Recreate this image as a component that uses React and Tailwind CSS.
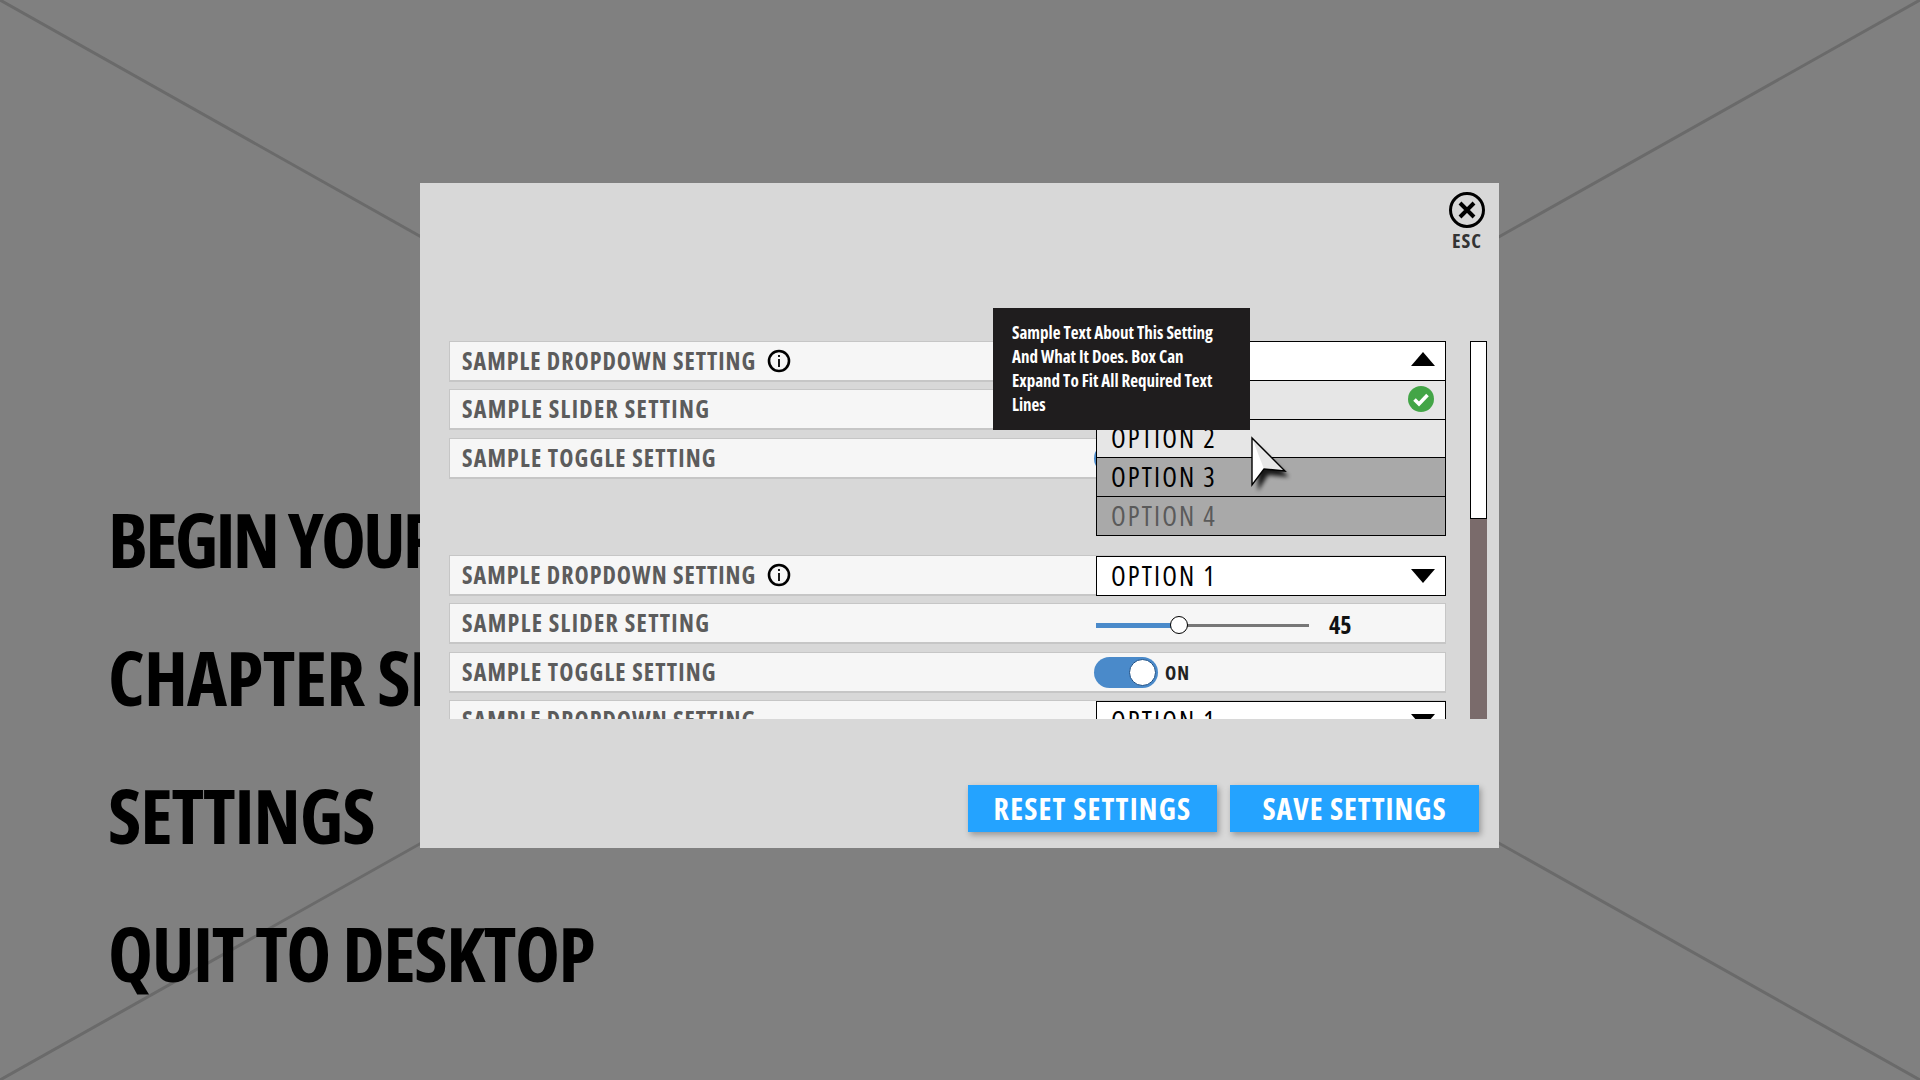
import React from "react";

const Info = () => (
  <svg width="24" height="24" viewBox="0 0 24 24" className="ml-[11px] shrink-0">
    <circle cx="12" cy="12" r="10" fill="none" stroke="#000" strokeWidth="2.6" />
    <rect x="11.1" y="10" width="1.8" height="8" fill="#000" />
    <rect x="11.1" y="6" width="1.8" height="2" fill="#000" />
  </svg>
);

const Caret = ({ up }) => (
  <svg width="24" height="14" viewBox="0 0 24 14" className={up ? "shrink-0 -mt-[5px]" : "shrink-0"}>
    <polygon points={up ? "0,14 24,14 12,0" : "0,0 24,0 12,14"} fill="#000" />
  </svg>
);

const Row = ({ label, info, track, children }) => (
  <div className="flex h-[41px] items-center bg-[#f6f6f6] border border-[#c6c6c6] border-b-2">
    <div className={"flex w-[646px] shrink-0 items-center pl-3 text-[24px] font-bold text-[#5c5c5c] whitespace-nowrap " + track}>
      {label}
      {info && <Info />}
    </div>
    <div className="relative h-full w-[349px] shrink-0">{children}</div>
  </div>
);

const Select = () => (
  <div className="flex h-[40px] w-[350px] items-center justify-between bg-white border border-black pl-[14px] pr-[10px]">
    <span className="text-[27px] tracking-[2.1px] text-black">OPTION 1</span>
    <Caret />
  </div>
);

const OpenSelect = () => (
  <div className="absolute -top-px left-0 z-10 flex w-[350px] flex-col border border-black">
    <div className="flex h-[39px] items-center justify-between bg-white pl-[14px] pr-[10px] border-b border-black">
      <span className="text-[27px] tracking-[2.1px] text-black">OPTION 1</span>
      <Caret up />
    </div>
    <div className="flex h-[39px] items-center justify-between bg-[#e6e6e6] pl-[14px] pr-[11px] border-b border-black">
      <span className="text-[27px] tracking-[2.1px] text-black">OPTION 1</span>
      <svg width="26" height="26" viewBox="0 0 26 26" className="-mt-[2px]">
        <circle cx="13" cy="13" r="13" fill="#43a547" />
        <path d="M6.5 13.5 L11 18 L19.5 9" fill="none" stroke="#fff" strokeWidth="3.6" />
      </svg>
    </div>
    <div className="flex h-[38px] items-center bg-[#e6e6e6] pl-[14px] border-b border-black text-[27px] tracking-[2.1px] text-black">OPTION 2</div>
    <div className="flex h-[39px] items-center bg-[#a9a9a9] pl-[14px] border-b border-black text-[27px] tracking-[2.1px] text-black">OPTION 3</div>
    <div className="flex h-[38px] items-center bg-[#a9a9a9] pl-[14px] text-[27px] tracking-[2.1px] text-[#5a5a5a]">OPTION 4</div>
  </div>
);

const Slider = () => (
  <div className="flex h-full items-center pt-[4px]">
    <div className="relative flex h-[20px] w-[213px] items-center">
      <div className="h-[5px] w-[83px] bg-[#4a8aca]" />
      <div className="h-[3px] flex-1 bg-[#777777]" />
      <div className="absolute left-[74px] top-[1px] h-[18px] w-[18px] rounded-full bg-white border border-black" />
    </div>
    <span className="ml-[20px] text-[24px] font-bold text-[#111]">45</span>
  </div>
);

const Toggle = () => (
  <div className="flex h-full items-center pt-[1px]">
    <div className="relative -ml-[2px] h-[31px] w-[64px] rounded-full bg-[#4a8aca]">
      <div className="absolute right-[2px] top-[2px] h-[27px] w-[27px] rounded-full bg-white border border-[#1c4f86]" />
    </div>
    <span className="ml-[7px] mt-[2px] text-[19px] font-bold tracking-[1px] text-[#222]">ON</span>
  </div>
);

const Cursor = () => (
  <svg width="60" height="70" viewBox="0 0 60 70" className="absolute left-[829px] top-[252px] z-30 overflow-visible">
    <defs>
      <filter id="cursor-shadow" x="-30%" y="-30%" width="160%" height="160%">
        <feGaussianBlur stdDeviation="2" />
      </filter>
    </defs>
    <polygon points="5,6 5,50 15,34 36,36" fill="#000" opacity="0.85" transform="translate(4,6)" filter="url(#cursor-shadow)" />
    <polygon points="3,3 3,50 15,34 36,36" fill="#e6e6e6" />
    <polygon points="3,3 3,50 15,34" fill="#ffffff" />
    <polygon points="3,3 3,50 15,34 36,36" fill="none" stroke="#000" strokeWidth="1.4" />
  </svg>
);

export default function App() {
  return (
    <div className="relative h-[1080px] w-full overflow-hidden bg-[#808080] font-['Open_Sans',sans-serif] [font-stretch:75%]">
      <svg className="absolute inset-0 h-full w-full" viewBox="0 0 1920 1080">
        <line x1="0" y1="0" x2="1920" y2="1080" stroke="#6a6a6a" strokeWidth="3" />
        <line x1="1920" y1="0" x2="0" y2="1080" stroke="#6a6a6a" strokeWidth="3" />
      </svg>

      <div className="relative flex flex-col pl-[108px] pt-[470px] text-[76px] font-bold leading-[138px] text-black whitespace-nowrap">
        <div className="tracking-[-2.9px]">BEGIN YOUR JOURNEY</div>
        <div className="tracking-[-0.8px]">CHAPTER SELECT</div>
        <div className="tracking-[-1.1px]">SETTINGS</div>
        <div className="tracking-[-1.4px]">QUIT TO DESKTOP</div>
      </div>

      <div className="absolute left-[420px] top-[183px] flex h-[665px] w-[1079px] flex-col bg-[#d8d8d8]">
        <div className="flex h-[158px] justify-end pr-[14px] pt-[9px]">
          <div className="flex w-[36px] flex-col items-center">
            <svg width="36" height="36" viewBox="0 0 36 36">
              <circle cx="18" cy="18" r="16.5" fill="none" stroke="#000" strokeWidth="3" />
              <path d="M11 11 L25 25 M25 11 L11 25" stroke="#000" strokeWidth="4" />
            </svg>
            <span className="mt-[2px] text-[20px] font-bold leading-[22px] tracking-[1px] text-[#333]">ESC</span>
          </div>
        </div>

        <div className="flex h-[378px] gap-[24px] pl-[29px]">
          <div className="flex w-[997px] flex-col overflow-hidden">
            <div className="flex flex-col gap-[7.3px]">
              <Row label="SAMPLE DROPDOWN SETTING" info track="tracking-[1px]"><OpenSelect /></Row>
              <Row label="SAMPLE SLIDER SETTING" track="tracking-[1.3px]"><Slider /></Row>
              <Row label="SAMPLE TOGGLE SETTING" track="tracking-[1.15px]"><Toggle /></Row>
            </div>
            <div className="mt-[76.4px] flex flex-col gap-[7.3px]">
              <Row label="SAMPLE DROPDOWN SETTING" info track="tracking-[1px]"><Select /></Row>
              <Row label="SAMPLE SLIDER SETTING" track="tracking-[1.3px]"><Slider /></Row>
              <Row label="SAMPLE TOGGLE SETTING" track="tracking-[1.15px]"><Toggle /></Row>
              <Row label="SAMPLE DROPDOWN SETTING" track="tracking-[1px]"><Select /></Row>
            </div>
          </div>
          <div className="flex h-full w-[17px] flex-col bg-[#7a6b6b]">
            <div className="h-[178px] bg-white border-[1.5px] border-black" />
          </div>
        </div>

        <div className="mt-[66px] flex justify-end gap-[13px] pr-[20px]">
          <button className="h-[47px] w-[249px] bg-[#24a3ff] text-[30px] font-bold tracking-[1.2px] text-white shadow-[2px_3px_6px_rgba(0,0,0,0.3)]">RESET SETTINGS</button>
          <button className="h-[47px] w-[249px] bg-[#24a3ff] text-[30px] font-bold tracking-[1px] text-white shadow-[2px_3px_6px_rgba(0,0,0,0.3)]">SAVE SETTINGS</button>
        </div>

        <div className="absolute left-[573px] top-[125px] z-20 w-[257px] bg-[#1f1d1e] py-[13px] pl-[19px] pr-[28px] text-[17px] font-bold leading-[24px] text-white">
          Sample Text About This Setting And What It Does. Box Can Expand To Fit All Required Text Lines
        </div>
        <Cursor />
      </div>
    </div>
  );
}
